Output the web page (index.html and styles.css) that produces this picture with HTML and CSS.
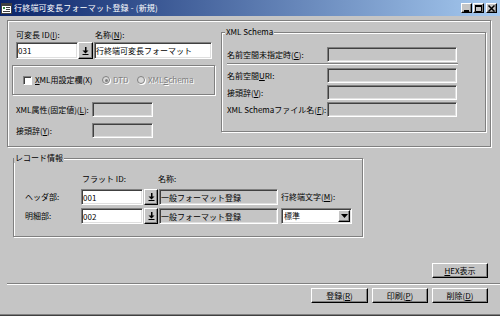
FILE: index.html
```html
<!DOCTYPE html>
<html lang="ja">
<head>
    <meta charset="UTF-8">
    <title>行終端可変長フォーマット登録 - (新規)</title>
    <link rel="stylesheet" href="styles.css">
</head>
<body>
<div class="window">
    <div class="titlebar">
        <svg class="app-icon" width="11" height="11" viewBox="0 0 11 11">
            <rect x="0.5" y="0.5" width="10" height="10" fill="#fff" stroke="#404040"/>
            <rect x="1" y="1" width="9" height="2" fill="#404040"/>
            <rect x="2" y="4" width="2" height="2" fill="#3a8a3a"/>
            <path d="M5 4.5h4M5 6.5h4M2 8.5h7" stroke="#404040" stroke-width="1"/>
        </svg>
        <span class="title">行終端可変長フォーマット登録 - (新規)</span>
        <div class="tb-buttons">
            <span class="tb-btn">
                <svg width="7" height="7" viewBox="0 0 7 7"><rect x="1" y="5" width="5" height="2" fill="#000"/></svg>
            </span>
            <span class="tb-btn">
                <svg width="7" height="7" viewBox="0 0 7 7"><path d="M0.5 1.5h6v5h-6z" fill="none" stroke="#000"/><rect x="0" y="0" width="7" height="2" fill="#000"/></svg>
            </span>
            <span class="tb-btn close">
                <svg width="7" height="7" viewBox="0 0 7 7"><path d="M0.5 0.5l6 6M6.5 0.5l-6 6" stroke="#000" stroke-width="1.5"/></svg>
            </span>
        </div>
    </div>

    <!-- 基本情報 -->
    <div class="top-frame etched">
        <div class="left-col">
            <div class="id-labels">
                <span class="lbl-id">可変長 ID(<u>I</u>):</span>
                <span>名称(<u>N</u>):</span>
            </div>
            <div class="id-row">
                <input class="field w-id" type="text" value="031">
                <button class="pick">
                    <svg width="7" height="8" viewBox="0 0 7 8"><rect x="3" y="0" width="1.5" height="4" fill="#000"/><path d="M0.5 3.5h6l-3 3z" fill="#000"/><rect x="0.5" y="7" width="6" height="1" fill="#000"/></svg>
                </button>
                <input class="field w-name" type="text" value="行終端可変長フォーマット">
            </div>
            <div class="xml-box etched">
                <label class="chk-item"><span class="chk"></span><span><u>X</u>ML用設定欄(X)</span></label>
                <span class="radio-item disabled"><span class="radio on"></span>DTD</span>
                <span class="radio-item disabled"><span class="radio"></span>XML <u>S</u>chema</span>
            </div>
            <div class="attr-row">
                <span class="attr-lbl">XML属性(固定値)(<u>L</u>):</span>
                <input class="field ro w-attr" type="text" readonly>
            </div>
            <div class="attr-row second">
                <span class="attr-lbl">接頭辞(<u>Y</u>):</span>
                <input class="field ro w-attr" type="text" readonly>
            </div>
        </div>

        <div class="group schema etched">
            <span class="legend">XML Schema</span>
            <div class="s-row">
                <span class="s-lbl">名前空間未指定時(<u>C</u>):</span>
                <input class="field ro w-s" type="text" readonly>
            </div>
            <div class="s-sep"></div>
            <div class="s-row">
                <span class="s-lbl">名前空間<u>U</u>RI:</span>
                <input class="field ro w-s" type="text" readonly>
            </div>
            <div class="s-row">
                <span class="s-lbl">接頭辞(<u>V</u>):</span>
                <input class="field ro w-s" type="text" readonly>
            </div>
            <div class="s-row">
                <span class="s-lbl">XML Schemaファイル名(<u>F</u>):</span>
                <input class="field ro w-s" type="text" readonly>
            </div>
        </div>
    </div>

    <!-- レコード情報 -->
    <div class="group record etched">
        <span class="legend">レコード情報</span>
        <div class="rec-head">
            <span class="rh-id">フラット ID:</span>
            <span>名称:</span>
        </div>
        <div class="rec-row">
            <span class="rec-lbl">ヘッダ部:</span>
            <input class="field w-fid" type="text" value="001">
            <button class="pick small">
                <svg width="7" height="8" viewBox="0 0 7 8"><rect x="3" y="0" width="1.5" height="4" fill="#000"/><path d="M0.5 3.5h6l-3 3z" fill="#000"/><rect x="0.5" y="7" width="6" height="1" fill="#000"/></svg>
            </button>
            <input class="field ro w-fname" type="text" value="一般フォーマット登録" readonly>
            <span class="eol-lbl">行終端文字(<u>M</u>):</span>
        </div>
        <div class="rec-row">
            <span class="rec-lbl">明細部:</span>
            <input class="field w-fid" type="text" value="002">
            <button class="pick small">
                <svg width="7" height="8" viewBox="0 0 7 8"><rect x="3" y="0" width="1.5" height="4" fill="#000"/><path d="M0.5 3.5h6l-3 3z" fill="#000"/><rect x="0.5" y="7" width="6" height="1" fill="#000"/></svg>
            </button>
            <input class="field ro w-fname" type="text" value="一般フォーマット登録" readonly>
            <div class="select">
                <span class="select-val">標準</span>
                <span class="select-btn">
                    <svg width="7" height="4" viewBox="0 0 7 4"><path d="M0 0h7l-3.5 4z" fill="#000"/></svg>
                </span>
            </div>
        </div>
    </div>

    <div class="hex-row">
        <button class="btn"><u>H</u>EX表示</button>
    </div>
    <div class="sep-line"></div>
    <div class="btn-row">
        <button class="btn wide">登録(<u>R</u>)</button>
        <button class="btn">印刷(<u>P</u>)</button>
        <button class="btn">削除(<u>D</u>)</button>
    </div>
</div>
</body>
</html>
```

FILE: styles.css
```css
* {
    box-sizing: border-box;
}
body {
    margin: 0;
    font-family: "Noto Sans CJK JP", "Liberation Sans", sans-serif;
    font-size: 8px;
    line-height: 10px;
    color: #000;
    background: #c5c5c5;
}
u {
    text-underline-offset: 1px;
}
.window {
    width: 500px;
    height: 316px;
    overflow: hidden;
    background: #c5c5c5;
    border-bottom: 1px solid #404040;
    box-shadow: inset 0 -1px #808080;
}

/* title bar */
.titlebar {
    height: 16px;
    display: flex;
    align-items: center;
    background: linear-gradient(to right, #0a246a, #a6caf0);
    color: #fff;
}
.app-icon {
    margin-left: 1px;
}
.title {
    margin-left: 2px;
    font-size: 8px;
    letter-spacing: 0.2px;
}
.tb-buttons {
    display: flex;
    margin-left: auto;
    margin-right: 3px;
}
.tb-btn {
    width: 11px;
    height: 10px;
    display: flex;
    align-items: center;
    justify-content: center;
    background: #c5c5c5;
    border: 1px solid;
    border-color: #fff #000 #000 #fff;
    box-shadow: inset -1px -1px #808080;
}
.tb-btn + .tb-btn {
    margin-left: 1px;
}
.tb-btn.close {
    margin-left: 2px;
}

/* common parts */
.etched {
    border: 1px solid #808080;
    box-shadow: inset 1px 1px #fff, 1px 1px #fff;
}
.field {
    height: 15px;
    margin: 0;
    padding: 0 1px;
    font: inherit;
    color: #000;
    background: #fff;
    border: 1px solid;
    border-color: #808080 #fff #fff #808080;
    box-shadow: inset 1px 1px #404040, inset -1px -1px #dfdfdf;
    outline: none;
}
.field.ro {
    background: #c5c5c5;
}
.pick, .btn {
    margin: 0;
    padding: 0;
    font: inherit;
    color: #000;
    background: #c5c5c5;
    border: 1px solid;
    border-color: #fff #000 #000 #fff;
    box-shadow: inset -1px -1px #808080;
    display: flex;
    align-items: center;
    justify-content: center;
}
.group {
    position: relative;
}
.legend {
    position: absolute;
    top: -6px;
    left: 3px;
    padding: 0 1px;
    background: #c5c5c5;
}
.disabled {
    color: #808080;
    text-shadow: 1px 1px #fff;
}

/* top frame */
.top-frame {
    width: 484px;
    height: 127px;
    margin: 4px 0 0 7px;
    display: flex;
    align-items: flex-start;
}
.left-col {
    width: 208px;
    padding: 9px 0 0 8px;
}
.id-labels {
    display: flex;
    height: 10px;
}
.lbl-id {
    width: 79px;
}
.id-row {
    display: flex;
    margin-top: 2px;
}
.w-id {
    width: 62px;
    height: 17px;
}
.id-row .pick {
    width: 15px;
    height: 17px;
}
.w-name {
    width: 118px;
    height: 17px;
    margin-left: 1px;
}
.xml-box {
    width: 203px;
    height: 30px;
    margin: 6px 0 0 -4px;
    padding-left: 10px;
    display: flex;
    align-items: center;
}
.chk-item {
    width: 79px;
    display: flex;
    align-items: center;
}
.chk {
    width: 9px;
    height: 9px;
    margin-right: 3px;
    background: #fff;
    border: 1px solid;
    border-color: #808080 #fff #fff #808080;
    box-shadow: inset 1px 1px #404040;
}
.radio-item {
    width: 35px;
    display: flex;
    align-items: center;
}
.radio-item:last-child {
    width: auto;
}
.radio {
    position: relative;
    width: 8px;
    height: 8px;
    margin-right: 3px;
    border-radius: 50%;
    background: #d8d8d8;
    border: 1px solid #808080;
    box-shadow: 1px 1px #fff;
}
.radio.on::after {
    content: "";
    position: absolute;
    left: 1.5px;
    top: 1.5px;
    width: 3px;
    height: 3px;
    border-radius: 50%;
    background: #808080;
}
.attr-row {
    display: flex;
    align-items: center;
    margin-top: 7px;
}
.attr-row.second {
    margin-top: 6px;
}
.attr-lbl {
    width: 76px;
}
.w-attr {
    width: 61px;
}

/* XML Schema */
.schema {
    width: 265px;
    height: 100px;
    margin: 11px 0 0 5px;
    padding: 14px 0 0 5px;
}
.s-row {
    display: flex;
    align-items: center;
}
.s-row + .s-row {
    margin-top: 2px;
}
.s-lbl {
    width: 100px;
}
.w-s {
    width: 130px;
}
.s-sep {
    width: 231px;
    height: 2px;
    margin: 1px 0 3px;
    border-top: 1px solid #808080;
    border-bottom: 1px solid #fff;
}

/* record */
.record {
    width: 350px;
    height: 79px;
    margin: 11px 0 0 13px;
    padding-top: 15px;
}
.record .legend {
    left: 0;
}
.rec-head {
    display: flex;
    height: 10px;
    padding-left: 68px;
}
.rh-id {
    width: 76px;
}
.rec-row {
    display: flex;
    align-items: center;
    margin-top: 5px;
    padding-left: 11px;
}
.rec-row + .rec-row {
    margin-top: 3px;
}
.rec-lbl {
    width: 56px;
}
.w-fid {
    width: 62px;
    height: 16px;
}
.pick.small {
    width: 14px;
    height: 16px;
    margin-left: 1px;
}
.w-fname {
    width: 119px;
    height: 16px;
    margin-left: 1px;
}
.eol-lbl {
    margin-left: 3px;
}
.select {
    width: 71px;
    height: 16px;
    margin-left: 3px;
    padding: 1px 1px 1px 2px;
    display: flex;
    align-items: center;
    background: #fff;
    border: 1px solid;
    border-color: #808080 #fff #fff #808080;
    box-shadow: inset 1px 1px #404040, inset -1px -1px #dfdfdf;
}
.select-btn {
    width: 12px;
    height: 12px;
    margin-left: auto;
    display: flex;
    align-items: center;
    justify-content: center;
    background: #c5c5c5;
    border: 1px solid;
    border-color: #fff #000 #000 #fff;
    box-shadow: inset -1px -1px #808080;
}

/* bottom buttons */
.hex-row {
    display: flex;
    justify-content: flex-end;
    margin: 26px 12px 0 0;
}
.btn {
    width: 56px;
    height: 15px;
}
.btn.wide {
    width: 57px;
}
.sep-line {
    height: 2px;
    margin: 5px 0 0 7px;
    border-top: 1px solid #808080;
    border-bottom: 1px solid #fff;
}
.btn-row {
    display: flex;
    justify-content: flex-end;
    gap: 4px;
    margin: 3px 12px 0 0;
}
```
